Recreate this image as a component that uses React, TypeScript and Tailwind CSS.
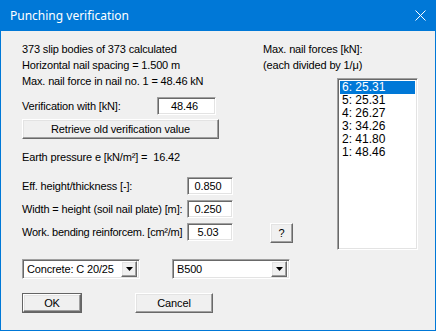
import React from 'react';

const sunken =
  'border border-t-[#a0a0a0] border-l-[#a0a0a0] border-b-white border-r-white shadow-[inset_1px_1px_0_#696969,inset_-1px_-1px_0_#e3e3e3] bg-white';
const raised =
  'border border-t-white border-l-white border-b-[#696969] border-r-[#696969] shadow-[inset_-1px_-1px_0_#a0a0a0,inset_1px_1px_0_#e3e3e3] bg-[#f0f0f0]';

const Field: React.FC<{ value: string; className?: string }> = ({ value, className }) => (
  <div className={`${sunken} h-[18px] flex items-center justify-center pr-[4px] text-[11px] ${className ?? ''}`}>
    {value}
  </div>
);

const Button: React.FC<{ label: string; className?: string; isDefault?: boolean }> = ({ label, className, isDefault }) => (
  <div className={`${isDefault ? 'border border-[#646464] p-0' : ''} ${className ?? ''}`}>
    <div className={`${raised} w-full h-full flex items-center justify-center text-[11px]`}>{label}</div>
  </div>
);

const Combo: React.FC<{ value: string; className?: string }> = ({ value, className }) => (
  <div className={`${sunken} h-[20px] flex items-center pl-[4px] pr-[2px] text-[11px] ${className ?? ''}`}>
    <span className="flex-1">{value}</span>
    <div className={`${raised} w-[16px] h-[16px] flex items-center justify-center`}>
      <svg width="7" height="4" viewBox="0 0 7 4">
        <path d="M0 0h7L3.5 4z" fill="#000" />
      </svg>
    </div>
  </div>
);

const forces = ['6: 25.31', '5: 25.31', '4: 26.27', '3: 34.26', '2: 41.80', '1: 48.46'];

export default function App() {
  return (
    <div className="w-[436px] h-[331px] flex flex-col border border-[#0078d7] font-['Liberation_Sans',Arial,sans-serif] text-black select-none">
      <div className="h-[30px] bg-[#0078d7] flex items-center justify-between pl-[9px] pr-[9px]">
        <span className="text-white text-[12px] font-['Noto_Sans',sans-serif]">Punching verification</span>
        <svg width="11" height="11" viewBox="0 0 11 11" className="mb-[1px]">
          <path d="M0.5 0.5l10 10M10.5 0.5l-10 10" stroke="#fff" strokeWidth="1" />
        </svg>
      </div>

      <div className="flex-1 bg-[#f0f0f0] pl-[21px] pt-[10px] text-[11px] tracking-[-0.15px]">
        <div className="flex h-[16px] leading-[16px]">
          <div className="w-[241px]">373 slip bodies of 373 calculated</div>
          <div>Max. nail forces [kN]:</div>
        </div>
        <div className="flex h-[16px] leading-[16px]">
          <div className="w-[241px]">Horizontal nail spacing = 1.500 m</div>
          <div>(each divided by 1/μ)</div>
        </div>

        <div className="flex">
          <div className="w-[315px] flex flex-col">
            <div className="h-[16px] leading-[16px]">Max. nail force in nail no. 1 = 48.46 kN</div>

            <div className="mt-[8px] flex items-center">
              <div className="w-[135px]">Verification with [kN]:</div>
              <Field value="48.46" className="w-[59px]" />
            </div>

            <Button label="Retrieve old verification value" className="mt-[4px] w-[197px] h-[20px]" />

            <div className="mt-[10px] h-[16px] leading-[16px] whitespace-pre">Earth pressure e [kN/m²] =  16.42</div>

            <div className="mt-[12px] flex items-center">
              <div className="w-[165px] whitespace-nowrap">Eff. height/thickness [-]:</div>
              <Field value="0.850" className="w-[46px]" />
            </div>
            <div className="mt-[5px] flex items-center">
              <div className="w-[165px] whitespace-nowrap">Width = height (soil nail plate) [m]:</div>
              <Field value="0.250" className="w-[46px]" />
            </div>
            <div className="mt-[5px] flex items-start">
              <div className="w-[165px] h-[18px] leading-[18px] whitespace-nowrap tracking-[-0.25px]">Work. bending reinforcem. [cm²/m]</div>
              <Field value="5.03" className="w-[46px]" />
              <Button label="?" className="ml-[37px] w-[23px] h-[20px]" />
            </div>
          </div>

          <div className={`${sunken} mt-[5px] w-[81px] h-[172px] p-[2px] text-[12px] tracking-normal`}>
            {forces.map((f, i) => (
              <div
                key={f}
                className={`h-[13px] leading-[13px] pl-[2px] ${i === 0 ? 'bg-[#0078d7] text-white' : ''}`}
              >
                {f}
              </div>
            ))}
          </div>
        </div>

        <div className="mt-[9px] flex gap-[32px]">
          <Combo value="Concrete: C 20/25" className="w-[118px]" />
          <Combo value="B500" className="w-[118px]" />
        </div>

        <div className="mt-[14px] flex gap-[53px]">
          <Button label="OK" isDefault className="w-[60px] h-[20px]" />
          <Button label="Cancel" className="w-[78px] h-[20px]" />
        </div>
      </div>
    </div>
  );
}
